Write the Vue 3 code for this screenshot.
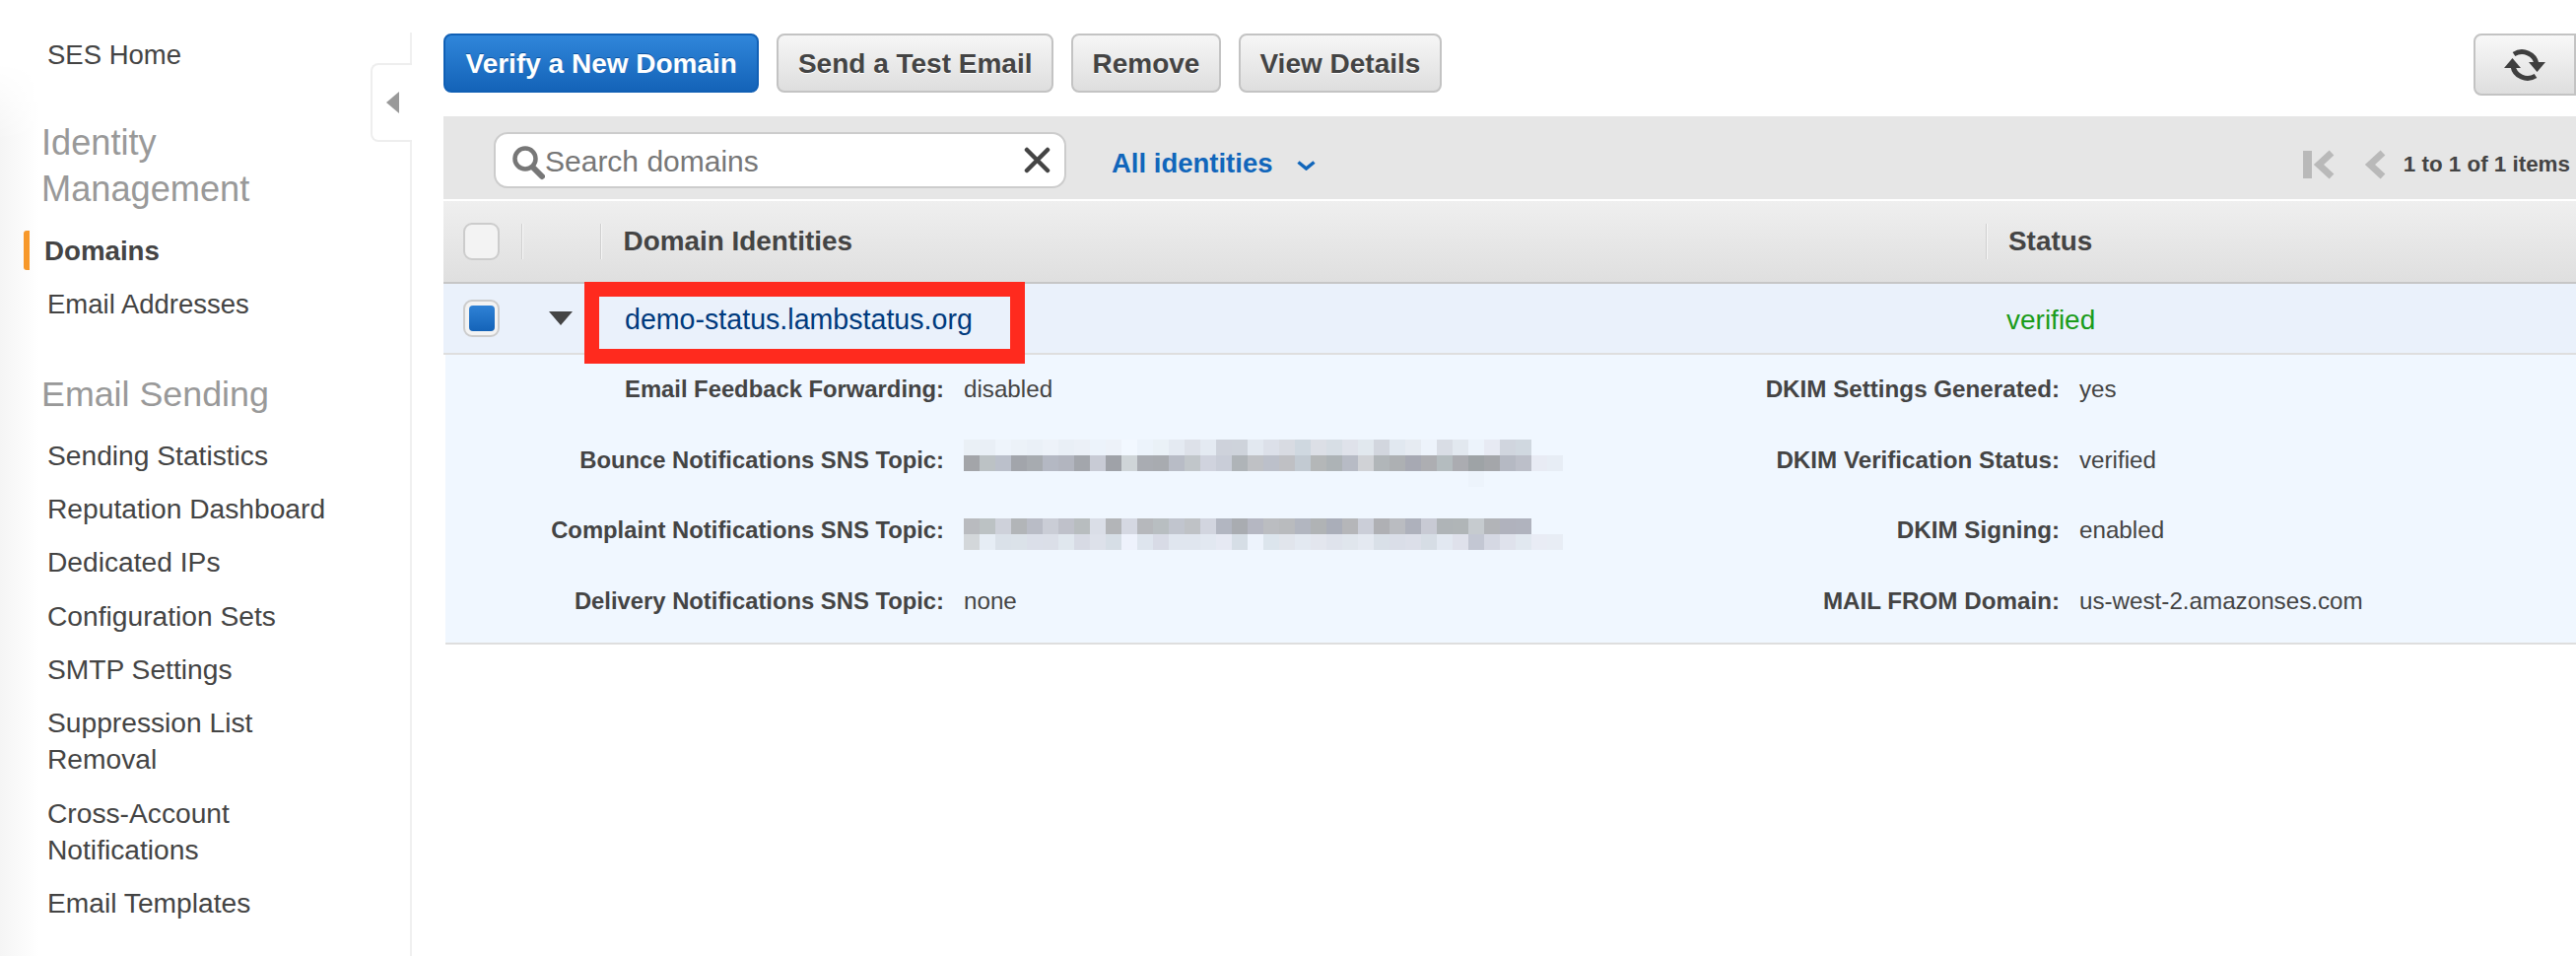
<script setup>
const linkGroups = ['Sending Statistics', 'Reputation Dashboard', 'Dedicated IPs', 'Configuration Sets', 'SMTP Settings']

const a1 = ['#eaf0f6','#e9eff6','#eef4fb','#ecf2f8','#eaf0f7','#edf2f9','#e9eff6','#ebf0f7','#ecf3fb','#edf2f9','#f2f8ff','#ecf3fb','#eaf1f7','#e4eaf2','#dde1e9','#e4eaf2','#ced2db','#ced3db','#e2e8f0','#dce0e9','#d8dbe2','#cfd8e0','#dcdfe6','#d7dee5','#dfe2ea','#e1e8ee','#d2d6de','#e1e8f0','#e6ebf2','#edf3fb','#d9dde5','#e2e8ef','#ecf3fb','#e7eaf3','#d0d5de','#d0d8e0']
const a2 = ['#a3a5a9','#bcc2c5','#bbc0cb','#a2a5ab','#a7abb0','#b4b8c3','#b2b5bf','#a3a6ac','#c8cbd5','#9fa2a8','#cfd5d8','#a9acb2','#a8abb0','#b8bcc6','#c1c6ca','#d0d3de','#c9cdd8','#afb4b8','#bfc1c5','#bcc0ca','#bfc0c4','#c2cad2','#b4b7b8','#adb3b6','#b7bbc5','#d0d2d6','#b1b6b9','#adb0b3','#a7a9b3','#adaeb2','#b4bcbf','#abacb1','#9ea3a6','#a4a6aa','#b5b9c3','#bcbfc9','#e8ebf4','#e7edf5']
const a3 = Array.from({ length: 33 }, (_, i) => (i === 32 ? '#edf4fc' : 'transparent'))
const b1 = ['#b9bbbf','#bcc2c4','#ced1da','#b2b5b8','#b9bcc6','#cacdd6','#bfc1ca','#b8bdbf','#dadee7','#b3b5b8','#d5d8e2','#b6b8bc','#b8bec1','#c1c5ce','#bfc2c6','#d2d5df','#b2b6c1','#a9acb1','#b5b7c2','#bbbdc1','#b9bbbe','#b2b6c0','#b0b3b5','#aaaeb9','#b5b6b9','#cbced8','#afb0b4','#babcc1','#aeb1bc','#c8cad4','#afb4b7','#b0b5b7','#c6cbcf','#b2b4b8','#b0b2bd','#b0b3be']
const b2 = ['#d3d7da','#e6edf5','#dae1e9','#dbe2e9','#dbdfe9','#dbdfe8','#e0e7ee','#d7dae4','#dde1ea','#d6dee6','#eef2fc','#dee5ee','#d8dbe6','#e0e6ef','#e0e6ef','#e2e8f1','#e6e9f3','#d6dee6','#edf3fc','#dce5ed','#e1e5ec','#e3e9f1','#e3e6ee','#dfe3ec','#e0e6ed','#e4e9f1','#d9e0e8','#dadee8','#dcdfe9','#d6dde5','#e2e8f1','#dfe1eb','#c3c7d3','#d5d8e3','#dfe2ec','#e1e8f0','#e9ecf5','#e8edf5']

const details = [
  { label: 'Email Feedback Forwarding:', value: 'disabled', label2: 'DKIM Settings Generated:', value2: 'yes' },
  { label: 'Bounce Notifications SNS Topic:', blur: [a1, a2, a3], cls: 'blur-a', label2: 'DKIM Verification Status:', value2: 'verified' },
  { label: 'Complaint Notifications SNS Topic:', blur: [b1, b2], cls: 'blur-b', label2: 'DKIM Signing:', value2: 'enabled' },
  { label: 'Delivery Notifications SNS Topic:', value: 'none', label2: 'MAIL FROM Domain:', value2: 'us-west-2.amazonses.com' },
]
</script>

<template>
  <div class="page">
    <aside class="sidebar">
      <a class="link home">SES Home</a>
      <h2 class="heading first">Identity<br />Management</h2>
      <a class="active">Domains</a>
      <a class="link addresses">Email Addresses</a>
      <h2 class="heading second">Email Sending</h2>
      <div class="links">
        <a v-for="l in linkGroups" :key="l" class="link">{{ l }}</a>
        <a class="link">Suppression List<br />Removal</a>
        <a class="link">Cross-Account<br />Notifications</a>
        <a class="link">Email Templates</a>
      </div>
      <div class="collapse"><i></i></div>
    </aside>

    <main class="main">
      <div class="actions">
        <button class="btn primary">Verify a New Domain</button>
        <button class="btn">Send a Test Email</button>
        <button class="btn">Remove</button>
        <button class="btn">View Details</button>
        <button class="btn refresh" aria-label="Refresh">
          <svg width="44" height="40" viewBox="0 0 44 40">
            <path d="M11 9 A15 14.500 0 0 1 34 19" fill="none" stroke="#3f3f3f" stroke-width="5" />
            <path d="M33 31 A15 14.500 0 0 1 10 21" fill="none" stroke="#3f3f3f" stroke-width="5" />
            <path d="M26 17 H43 L34.500 27 Z" fill="#3f3f3f" />
            <path d="M1 23 H18 L9.500 13 Z" fill="#3f3f3f" />
          </svg>
        </button>
      </div>

      <div class="filter">
        <div class="search">
          <svg class="mag" width="33" height="36" viewBox="0 0 33 36">
            <circle cx="13" cy="14" r="10.500" fill="none" stroke="#777" stroke-width="4.500" />
            <path d="M21 23 L30 32" stroke="#777" stroke-width="6" stroke-linecap="round" />
          </svg>
          <span class="placeholder">Search domains</span>
          <svg class="clear" width="27" height="27" viewBox="0 0 27 27">
            <path d="M3 3 L24 24 M24 3 L3 24" stroke="#444" stroke-width="4.500" stroke-linecap="round" />
          </svg>
        </div>
        <span class="scope">All identities</span>
        <svg class="chev" width="19" height="10" viewBox="0 0 19 10">
          <path d="M1.500 1.500 L9.500 8 L17.500 1.500" fill="none" stroke="#1166bb" stroke-width="3.500" />
        </svg>
        <div class="pager">
          <svg width="32" height="30" viewBox="0 0 32 30">
            <rect x="0" y="1" width="9" height="28" fill="#b9b9b9" />
            <path d="M29 3 L16 15 L29 27" fill="none" stroke="#b9b9b9" stroke-width="7" />
          </svg>
          <svg class="prev" width="22" height="30" viewBox="0 0 22 30">
            <path d="M19 3 L6 15 L19 27" fill="none" stroke="#b9b9b9" stroke-width="7" />
          </svg>
          <span>1 to 1 of 1 items</span>
        </div>
      </div>

      <div class="head cols">
        <div class="cell first-cell"><span class="check"></span></div>
        <div class="cell sep"></div>
        <div class="cell sep title">Domain Identities</div>
        <div class="cell sep title status-title">Status</div>
      </div>

      <div class="row cols">
        <div class="cell first-cell"><span class="check on"><i></i></span></div>
        <div class="cell"><i class="caret"></i></div>
        <div class="cell domain">demo-status.lambstatus.org</div>
        <div class="cell verified">verified</div>
        <div class="annotation"></div>
      </div>

      <div class="details">
        <div v-for="d in details" :key="d.label" class="drow">
          <div class="pair">
            <b class="l1">{{ d.label }}</b>
            <span v-if="d.value">{{ d.value }}</span>
            <div v-else class="mosaic" :class="d.cls">
              <div v-for="(r, ri) in d.blur" :key="ri" class="mrow">
                <i v-for="(c, ci) in r" :key="ci" :style="{ background: c }"></i>
              </div>
            </div>
          </div>
          <div class="pair">
            <b class="l2">{{ d.label2 }}</b>
            <span>{{ d.value2 }}</span>
          </div>
        </div>
      </div>
    </main>
  </div>
</template>

<style scoped>
.page {
  display: flex;
  width: 2614px;
  height: 970px;
  overflow: hidden;
  background: #fff;
  font-family: "Liberation Sans", Arial, sans-serif;
  color: #444;
}
.sidebar {
  position: relative;
  box-sizing: border-box;
  width: 418px;
  flex: none;
  margin-top: 33px;
  border-right: 2px solid #f0f0f0;
  font-size: 27.500px;
}
.sidebar::before {
  content: "";
  position: absolute;
  left: 0;
  top: 0;
  bottom: -33px;
  width: 40px;
  background: linear-gradient(90deg, #f5f5f5, #fff);
  -webkit-mask-image: linear-gradient(180deg, transparent 30px, #000 110px);
  mask-image: linear-gradient(180deg, transparent 30px, #000 110px);
}
.sidebar > * {
  position: relative;
}
.link {
  display: block;
  padding: 8.700px 0 8.700px 48px;
  line-height: 37px;
}
.home {
  padding: 3.500px 0 3.500px 48px;
}
.heading {
  margin: 0;
  padding-left: 42px;
  font-size: 36.200px;
  line-height: 47px;
  font-weight: 400;
  color: #999;
}
.heading.first {
  margin-top: 44px;
}
.active {
  display: block;
  box-sizing: border-box;
  height: 40px;
  margin: 19px 0 0 24px;
  padding-left: 15px;
  border-left: 6px solid #f7982a;
  border-radius: 3px;
  line-height: 42px;
  font-weight: 700;
  font-size: 27.700px;
}
.addresses {
  margin-top: 7.500px;
}
.heading.second {
  margin-top: 41px;
  font-size: 35.800px;
}
.links {
  margin-top: 11px;
  font-size: 28.200px;
}
.collapse {
  position: absolute !important;
  left: 376px;
  top: 31px;
  box-sizing: border-box;
  width: 42px;
  height: 80px;
  display: flex;
  align-items: center;
  padding-left: 14px;
  background: #fff;
  border: 2px solid #eee;
  border-right: 0;
  border-radius: 8px 0 0 8px;
}
.collapse i {
  width: 0;
  height: 0;
  border-top: 11px solid transparent;
  border-bottom: 11px solid transparent;
  border-right: 13px solid #999;
}
.main {
  width: 2164px;
  margin-left: 32px;
  flex: none;
}
.actions {
  display: flex;
  align-items: flex-start;
  gap: 18px;
  height: 118px;
  padding-top: 34px;
  box-sizing: border-box;
}
.btn {
  box-sizing: border-box;
  height: 60px;
  padding: 2px 19.500px 0;
  border: 2px solid #c3c3c3;
  border-radius: 8px;
  background: linear-gradient(180deg, #f6f6f6, #dedede);
  color: #444;
  font: 700 28px "Liberation Sans", Arial, sans-serif;
  text-shadow: 0 1px 0 #fff;
  white-space: nowrap;
}
.primary {
  padding: 2px 20.500px 0;
  border-color: #1160b5;
  background: linear-gradient(180deg, #3086da, #1463b8);
  color: #fff;
  text-shadow: 0 -1px 0 #0e55a0;
}
.refresh {
  width: 104px;
  height: 63px;
  margin-left: auto;
  padding: 0;
  display: flex;
  align-items: center;
  justify-content: center;
  border-radius: 8px 0 0 8px;
  background: linear-gradient(180deg, #f8f8f8, #dedede);
}
.filter {
  display: flex;
  align-items: flex-start;
  height: 84px;
  background: #e6e6e6;
}
.search {
  box-sizing: border-box;
  display: flex;
  align-items: center;
  width: 581px;
  height: 57px;
  margin: 16px 0 0 51px;
  padding: 0 14px 0 17px;
  background: #fff;
  border: 2px solid #ccc;
  border-radius: 14px;
}
.mag {
  flex: none;
  margin-top: 4px;
}
.placeholder {
  flex: 1;
  margin-left: 0;
  padding-top: 2px;
  font-size: 30px;
  color: #777;
}
.clear {
  flex: none;
}
.scope {
  margin: 31px 0 0 46px;
  line-height: 34px;
  font-size: 27.500px;
  font-weight: 700;
  color: #1166bb;
}
.chev {
  margin: 45px 0 0 24px;
}
.pager {
  display: flex;
  align-items: center;
  margin: 32px 6px 0 auto;
  height: 34px;
  font-size: 22.400px;
  font-weight: 700;
}
.prev {
  margin: 0 18px 0 30px;
}
.cols {
  display: grid;
  grid-template-columns: 79px 80px 1406px 1fr;
}
.head {
  box-sizing: border-box;
  height: 84px;
  margin-top: 2px;
  align-items: center;
  border-bottom: 2px solid #c6c6c6;
  background: linear-gradient(180deg, #efefef, #dfdfdf);
}
.cell {
  display: flex;
  align-items: center;
  min-width: 0;
}
.first-cell {
  padding-left: 20px;
}
.check {
  box-sizing: border-box;
  display: flex;
  align-items: center;
  justify-content: center;
  width: 37px;
  height: 38px;
  border: 2px solid #ccc;
  border-radius: 9px;
  background: #f3f3f3;
}
.check.on i {
  width: 26px;
  height: 26px;
  border-radius: 4px;
  background: linear-gradient(180deg, #2f82d6, #1463b8);
}
.sep {
  height: 36px;
  border-left: 1px solid #cfcfcf;
  box-shadow: inset 1px 0 0 #f7f7f7;
}
.title {
  padding-left: 22.500px;
  font-size: 27.900px;
  font-weight: 700;
}
.status-title {
  padding-left: 22px;
}
.row {
  position: relative;
  box-sizing: border-box;
  height: 72px;
  align-items: center;
  border-bottom: 2px solid #dedede;
  background: #eaf1fb;
}
.caret {
  width: 0;
  height: 0;
  margin: 0 0 0 28px;
  border-left: 12px solid transparent;
  border-right: 12px solid transparent;
  border-top: 14px solid #444;
}
.domain {
  padding: 2px 0 0 25px;
  font-size: 28.600px;
  color: #003a7d;
}
.verified {
  padding: 3px 0 0 21px;
  font-size: 28px;
  color: #1a9c1a;
}
.annotation {
  position: absolute;
  left: 143px;
  top: -2px;
  box-sizing: border-box;
  width: 447px;
  height: 83px;
  border: 15px solid #ff2a1e;
}
.details {
  box-sizing: border-box;
  height: 294px;
  margin-left: 2px;
  padding-bottom: 6px;
  border-bottom: 2px solid #dedede;
  background: #f0f7ff;
  font-size: 24.200px;
}
.drow {
  display: grid;
  grid-template-columns: 1149px 1fr;
  height: 71.500px;
}
.drow:first-child {
  margin-top: -0.500px;
}
.pair {
  display: flex;
  align-items: center;
  gap: 20px;
}
.pair b {
  flex: none;
  text-align: right;
}
.l1 {
  width: 506px;
  font-size: 23.800px;
}
.l2 {
  width: 489px;
}
.mosaic {
  align-self: flex-start;
}
.blur-a {
  margin-top: 15px;
}
.blur-b {
  margin-top: 23.500px;
}
.mrow {
  display: flex;
  height: 16px;
}
.mrow i {
  flex: none;
  width: 16px;
  height: 16px;
}
</style>

<style>
html, body {
  margin: 0;
  overflow: hidden;
  background: #fff;
}
</style>
